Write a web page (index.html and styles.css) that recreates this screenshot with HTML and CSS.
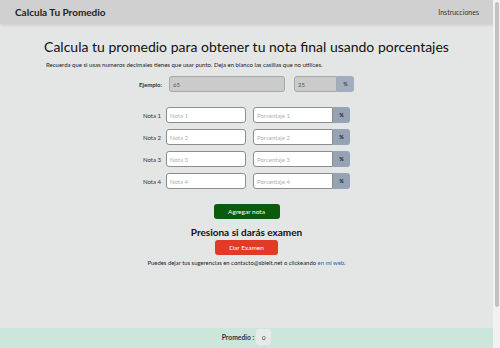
FILE: index.html
```html
<!DOCTYPE html>
<html lang="es">
<head>
    <meta charset="UTF-8">
    <meta name="viewport" content="width=device-width, initial-scale=1.0">
    <title>Calcula Tu Promedio</title>
    <link rel="stylesheet" href="styles.css">
</head>
<body>
    <div class="page">
        <nav class="navbar">
            <span class="brand">Calcula Tu Promedio</span>
            <a class="nav-link" href="#">Instrucciones</a>
        </nav>

        <main class="main">
            <h1>Calcula tu promedio para obtener tu nota final usando porcentajes</h1>
            <p class="hint">Recuerda que si usas numeros decimales tienes que usar punto. Deja en blanco las casillas que no utilices.</p>

            <div class="row example">
                <label class="label bold">Ejemplo:</label>
                <input class="field grey wide" type="text" value="65" readonly>
                <div class="group">
                    <input class="field grey small" type="text" value="25" readonly>
                    <span class="addon light">%</span>
                </div>
            </div>

            <div class="notes">
                <div class="row">
                    <label class="label">Nota 1</label>
                    <input class="field" type="text" placeholder="Nota 1">
                    <div class="group">
                        <input class="field" type="text" placeholder="Porcentaje 1">
                        <span class="addon">%</span>
                    </div>
                </div>
                <div class="row">
                    <label class="label">Nota 2</label>
                    <input class="field" type="text" placeholder="Nota 2">
                    <div class="group">
                        <input class="field" type="text" placeholder="Porcentaje 2">
                        <span class="addon">%</span>
                    </div>
                </div>
                <div class="row">
                    <label class="label">Nota 3</label>
                    <input class="field" type="text" placeholder="Nota 3">
                    <div class="group">
                        <input class="field" type="text" placeholder="Porcentaje 3">
                        <span class="addon">%</span>
                    </div>
                </div>
                <div class="row">
                    <label class="label">Nota 4</label>
                    <input class="field" type="text" placeholder="Nota 4">
                    <div class="group">
                        <input class="field" type="text" placeholder="Porcentaje 4">
                        <span class="addon">%</span>
                    </div>
                </div>
            </div>

            <button class="btn green">Agregar nota</button>
            <h2>Presiona si darás examen</h2>
            <button class="btn red">Dar Examen</button>
            <p class="contact">Puedes dejar tus sugerencias en contacto@sbleit.net o clickeando <a href="#">en mi web</a>.</p>
        </main>

        <footer class="footer">
            <span class="avg-label">Promedio :</span>
            <span class="avg-value">0</span>
        </footer>
    </div>
    <div class="scrollbar"><div class="thumb"></div></div>
</body>
</html>
```

FILE: styles.css
```css
body {
    font-family: 'Lato', 'Noto Sans', sans-serif;
    background-color: #e4e5e5;
    margin: 0;
    color: #212529;
    display: flex;
}
.page {
    flex: 1;
}
.scrollbar {
    width: 7px;
    height: 348px;
    background-color: #f1f1f1;
    display: flex;
    justify-content: center;
    padding-top: 2px;
    box-sizing: border-box;
}
.thumb {
    width: 4px;
    height: 305px;
    background-color: #c1c1c1;
    border-radius: 2px;
}
.navbar {
    display: flex;
    justify-content: space-between;
    align-items: center;
    height: 24px;
    padding: 0 14px 0 15px;
    background-color: #d0d0d0;
    box-shadow: 0 1px 3px rgba(0, 0, 0, 0.12);
}
.brand {
    font-size: 10px;
    font-weight: bold;
    color: #222;
}
.nav-link {
    font-size: 7px;
    color: #333;
    text-decoration: none;
}
.main {
    display: flex;
    flex-direction: column;
    align-items: center;
    height: 304px;
}
h1 {
    font-size: 14px;
    font-weight: normal;
    color: #111;
    margin: 14px 0 0;
}
.hint {
    align-self: flex-start;
    margin: 6px 0 0 46px;
    font-size: 6px;
    color: #222;
}
.row {
    display: flex;
    align-items: center;
    gap: 5px;
    height: 16px;
}
.row .group {
    margin-left: 2px;
}
.example {
    margin-top: 8px;
    gap: 7px;
}
.notes {
    display: flex;
    flex-direction: column;
    gap: 6px;
    margin-top: 15px;
}
.label {
    font-size: 6px;
    color: #333;
}
.label.bold {
    font-weight: bold;
}
.group {
    display: flex;
}
.field {
    box-sizing: border-box;
    width: 80px;
    height: 16px;
    padding: 0 3px;
    font-family: inherit;
    font-size: 6px;
    color: #555;
    background-color: #fff;
    border: 1px solid #8d8d8d;
    border-radius: 3px;
    outline: none;
}
.field::placeholder {
    color: #b0b0b0;
}
.group .field {
    border-radius: 3px 0 0 3px;
}
.field.grey {
    background-color: #cbcbcb;
    border-color: #a8a8a8;
}
.field.wide {
    width: 116px;
}
.field.small {
    width: 43px;
}
.addon {
    display: flex;
    align-items: center;
    justify-content: center;
    width: 17px;
    height: 16px;
    background-color: #95a3b5;
    border-radius: 0 3px 3px 0;
    font-size: 5.5px;
    font-weight: bold;
    color: #222;
}
.addon.light {
    background-color: #a2aec0;
    font-weight: normal;
}
.btn {
    border: none;
    border-radius: 3px;
    width: 66px;
    height: 15px;
    font-family: inherit;
    font-size: 6.5px;
    color: #fff;
    cursor: pointer;
}
.btn.green {
    background-color: #0a5c0c;
    margin-top: 15px;
}
.btn.red {
    background-color: #e13a27;
    width: 63px;
}
h2 {
    font-size: 10px;
    font-weight: bold;
    color: #111;
    margin: 7px 0 2px;
}
.contact {
    font-size: 5.9px;
    color: #222;
    margin: 4px 0 0;
}
.contact a {
    color: #2563b6;
    text-decoration: none;
}
.footer {
    display: flex;
    justify-content: center;
    align-items: flex-start;
    gap: 2px;
    height: 40px;
    padding-top: 1px;
    background-color: #cde6dc;
}
.avg-label {
    font-size: 6.8px;
    font-weight: bold;
    color: #333;
    line-height: 16px;
}
.avg-value {
    display: flex;
    align-items: center;
    justify-content: center;
    width: 15px;
    height: 16px;
    background-color: #e6eae8;
    border-radius: 3px;
    font-size: 6px;
    color: #333;
}
```
